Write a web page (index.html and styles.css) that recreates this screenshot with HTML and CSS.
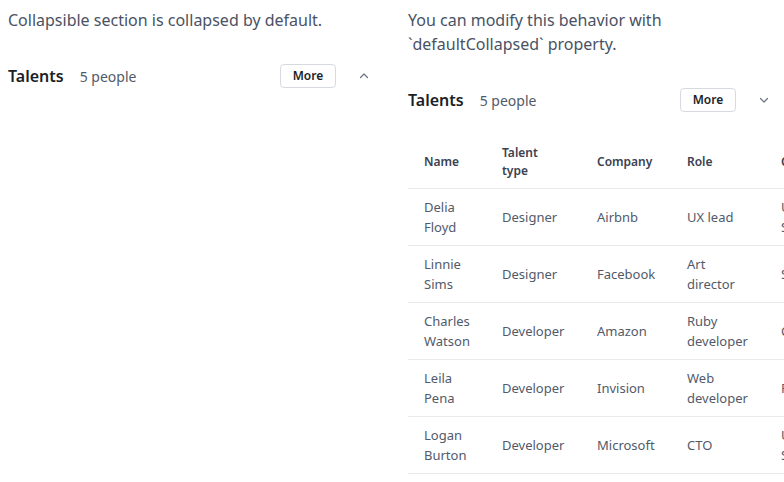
FILE: index.html
```html
<!DOCTYPE html>
<html>
<head>
<meta charset="utf-8">
<link rel="stylesheet" href="styles.css">
</head>
<body>
<div class="grid">
  <section class="col">
    <p class="desc">Collapsible section is collapsed by default.</p>
    <div class="section-head">
      <div class="titles"><span class="title">Talents</span><span class="sub">5 people</span></div>
      <div class="actions">
        <button class="btn">More</button>
        <span class="chev"><svg width="16" height="16" viewBox="0 0 16 16"><path d="M4.5 9.5 L8 6 L11.5 9.5" fill="none" stroke="#6b7280" stroke-width="1.2" stroke-linecap="round" stroke-linejoin="round"/></svg></span>
      </div>
    </div>
  </section>
  <section class="col">
    <p class="desc">You can modify this behavior with `defaultCollapsed` property.</p>
    <div class="section-head">
      <div class="titles"><span class="title">Talents</span><span class="sub">5 people</span></div>
      <div class="actions">
        <button class="btn">More</button>
        <span class="chev"><svg width="16" height="16" viewBox="0 0 16 16"><path d="M4.5 6.5 L8 10 L11.5 6.5" fill="none" stroke="#6b7280" stroke-width="1.2" stroke-linecap="round" stroke-linejoin="round"/></svg></span>
      </div>
    </div>
    <div class="tbl-wrap">
    <table class="tbl">
      <colgroup><col class="c1"><col class="c2"><col class="c3"><col class="c4"><col class="c5"></colgroup>
      <thead>
        <tr><th>Name</th><th>Talent type</th><th>Company</th><th>Role</th><th>Country</th></tr>
      </thead>
      <tbody>
        <tr><td>Delia Floyd</td><td>Designer</td><td>Airbnb</td><td>UX lead</td><td>United States</td></tr>
        <tr><td>Linnie Sims</td><td>Designer</td><td>Facebook</td><td>Art director</td><td>Sweden</td></tr>
        <tr><td>Charles Watson</td><td>Developer</td><td>Amazon</td><td>Ruby developer</td><td>Canada</td></tr>
        <tr><td>Leila Pena</td><td>Developer</td><td>Invision</td><td>Web developer</td><td>France</td></tr>
        <tr><td>Logan Burton</td><td>Developer</td><td>Microsoft</td><td>CTO</td><td>United States</td></tr>
      </tbody>
    </table>
    </div>
  </section>
</div>
</body>
</html>
```
FILE: styles.css
```css
body {
  margin: 8px 0 8px 8px;
  font-family: "Noto Sans", sans-serif;
  color: #4a5263;
  background: #fff;
  overflow: hidden;
}
.grid {
  display: grid;
  grid-template-columns: 384px 376px;
  column-gap: 16px;
  align-items: start;
}
.col { min-width: 0; }
.desc {
  margin: 0;
  font-size: 16px;
  line-height: 24px;
  color: #4a5263;
}
.section-head {
  margin-top: 24px;
  height: 40px;
  display: flex;
  align-items: center;
  justify-content: space-between;
  padding-right: 20px;
}
.col + .col .section-head { padding-right: 12px; }
.titles { display: flex; align-items: baseline; gap: 16px; }
.title {
  font-size: 16px;
  font-weight: 600;
  color: #1b1f27;
}
.sub {
  font-size: 14px;
  color: #525a6a;
}
.actions { display: flex; align-items: center; gap: 20px; }
.btn {
  font-family: "Noto Sans", sans-serif;
  font-size: 12px;
  font-weight: 600;
  color: #1b1f27;
  background: #fff;
  border: 1px solid #d6dae0;
  border-radius: 4px;
  height: 24px;
  width: 56px;
  padding: 0;
  line-height: 22px;
}
.chev { display: flex; width: 16px; height: 16px; }
.tbl-wrap {
  margin-top: 16px;
  overflow: hidden;
}
.tbl {
  border-collapse: collapse;
  table-layout: fixed;
  width: 458px;
}
.c1 { width: 78px; }
.c2 { width: 95px; }
.c3 { width: 90px; }
.c4 { width: 94px; }
.c5 { width: 101px; }
.tbl th {
  text-align: left;
  font-size: 12px;
  font-weight: 600;
  line-height: 18px;
  color: #3a4150;
  padding: 8px 16px;
  vertical-align: middle;
  border-bottom: 1px solid #e8eaee;
}
.tbl td {
  font-size: 13px;
  line-height: 20px;
  color: #525a6a;
  padding: 8px 16px;
  vertical-align: middle;
  border-bottom: 1px solid #e8eaee;
}
```
